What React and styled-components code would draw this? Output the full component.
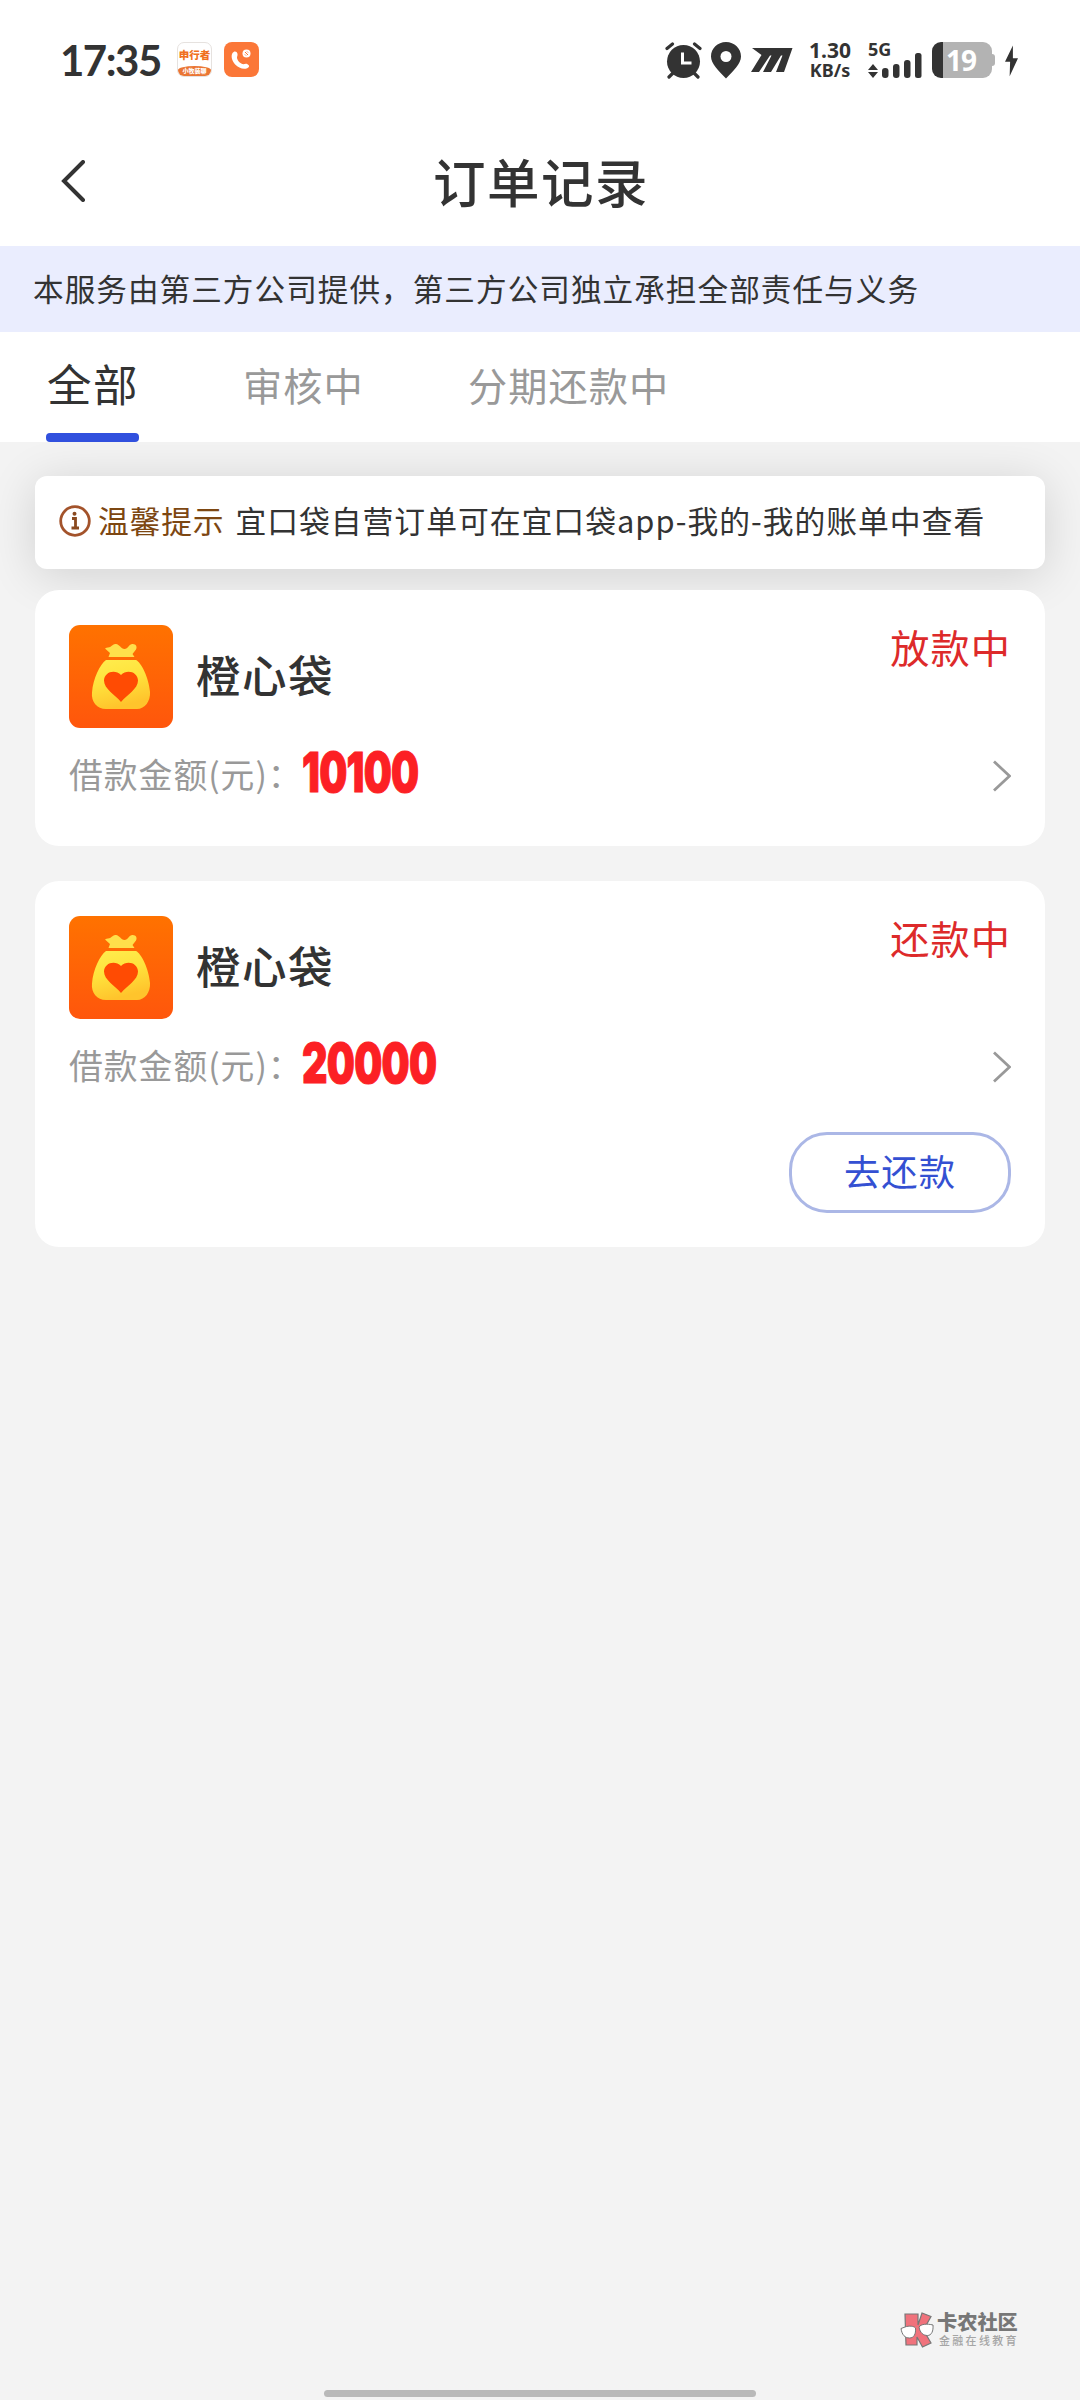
import React from "react";
import styled, {createGlobalStyle} from "styled-components";

const GlobalStyle = createGlobalStyle`
  * {
    box-sizing: border-box;
  }
  body {
    margin: 0;
    background: #f3f3f3;
    color: #333;
    font-family: "Noto Sans CJK SC", sans-serif;
  }
`;

const Screen = styled.div`
  display: flex;
  flex-direction: column;
  width: 1080px;
  height: 2400px;
  overflow: hidden;
  background: #f3f3f3;
  white-space: nowrap;
`;

const StatusBar = styled.div`
  display: flex;
  align-items: flex-start;
  height: 114px;
  padding: 42px 62px 0 60px;
  background: #fff;

  svg {
    display: block;
    flex: none;
  }
`;

const Time = styled.div`
  width: 117px;
  font: 700 42px/36px Lato, sans-serif;
  letter-spacing: -1.5px;
`;

const AppBadge = styled.div`
  display: flex;
  flex-direction: column;
  justify-content: space-between;
  width: 35px;
  height: 35px;
  margin-right: 12px;
  padding-top: 6px;
  overflow: hidden;
  border: 1px solid #e6e2df;
  border-radius: 7px;
  background: #fff;
  color: #f07020;
  font-size: 10.5px;
  font-weight: 900;
  line-height: 12px;
  text-align: center;
`;

const BadgeFoot = styled.div`
  height: 10px;
  border-radius: 50% 50% 0 0 / 4px 4px 0 0;
  background: #ea7634;
  color: #fff;
  font-size: 6px;
  line-height: 10px;
`;

const StatusIcons = styled.div`
  display: flex;
  margin-left: auto;
`;

const Speed = styled.div`
  width: 44px;
  margin: -2px 16px 0 15px;
  font: 700 21px/20px "Noto Sans", sans-serif;
  text-align: center;
`;

const SpeedUnit = styled.div`
  font-size: 18px;
  line-height: 20px;
`;

const Network = styled.div`
  width: 54px;
  margin-right: 10px;
  font: 700 18px/15px "Noto Sans", sans-serif;
`;

const Battery = styled.div`
  display: flex;
  align-items: center;
  width: 60px;
  height: 36px;
  padding-left: 14px;
  border-radius: 9px;
  background: linear-gradient(90deg, #333 11px, #b3b3b3 11px);
  color: #fff;
  font: 700 28px/36px "Noto Sans", sans-serif;
  letter-spacing: -1px;
`;

const BatteryNub = styled.div`
  width: 3px;
  height: 12px;
  margin: 12px 10px 0 0;
  border-radius: 0 3px 3px 0;
  background: #b3b3b3;
`;

const Header = styled.header`
  display: grid;
  grid-template-columns: 120px 1fr 120px;
  align-items: center;
  height: 132px;
  background: #fff;
`;

const BackButton = styled.button`
  display: flex;
  padding: 2px 0 0 60px;
  border: 0;
  background: none;
`;

const Title = styled.h1`
  margin: 0;
  padding-left: 2px;
  font-size: 52.5px;
  font-weight: 500;
  letter-spacing: 1.5px;
  line-height: 78px;
  text-align: center;
`;

const Notice = styled.div`
  height: 86px;
  padding-left: 33px;
  background: #eaedfe;
  font-size: 30.6px;
  letter-spacing: 1.05px;
  line-height: 84px;
`;

const Tabs = styled.nav`
  display: flex;
  gap: 103px;
  height: 110px;
  padding-left: 46px;
  background: #fff;
`;

const Tab = styled.div`
  display: flex;
  flex-direction: column;
  justify-content: space-between;
  color: ${props => props.$active ? "#333" : "#999"};
  font-size: ${props => props.$active ? "44.5px" : "39.2px"};
  letter-spacing: ${props => props.$active ? "1.5px" : "1.1px"};
  line-height: ${props => props.$active ? "102px" : "105px"};
  text-indent: 1px;

  &::after {
    content: "";
    height: 9px;
    margin-top: -5px;
    border-radius: 4px;
    background: ${props => props.$active ? "#3150de" : "transparent"};
  }
`;

const Content = styled.main`
  display: flex;
  flex: 1;
  flex-direction: column;
  min-height: 0;
  padding: 34px 35px 0;
  overflow: hidden;
`;

const Tip = styled.div`
  display: flex;
  align-items: center;
  height: 93px;
  margin-bottom: 21px;
  padding: 0 0 5px 24px;
  border-radius: 12px;
  background: #fff;
  box-shadow: 0 6px 48px rgba(0, 0, 0, 0.14);
  font-size: 30.8px;
  letter-spacing: 1px;
  line-height: 86px;

  svg {
    margin-top: 2px;
  }
`;

const TipTitle = styled.span`
  margin: 0 11px 0 7px;
  color: #7d4712;
  letter-spacing: 0.8px;
`;

const Card = styled.section`
  z-index: 1;
  height: ${props => props.$height};
  margin-bottom: 35px;
  padding: 35px 34px 0;
  border-radius: 24px;
  background: #fff;
`;

const CardHead = styled.div`
  display: flex;
  height: 103px;
`;

const Name = styled.h2`
  margin: 0 auto 0 23px;
  font-size: 44.5px;
  font-weight: 500;
  letter-spacing: 1.5px;
  line-height: 97px;
`;

const Status = styled.div`
  color: #dd2a2a;
  font-size: 39.2px;
  letter-spacing: 1.1px;
  line-height: 43px;
`;

const AmountRow = styled.div`
  display: flex;
  align-items: center;
  height: 96px;
`;

const Label = styled.span`
  width: 233px;
  margin-top: -5px;
  color: #999;
  font-size: 33.8px;
  letter-spacing: 1px;
`;

const Amount = styled.span`
  margin: -9px auto 0 0;
  color: #fc2024;
  font: 900 54.5px/60px Inter, sans-serif;
  letter-spacing: -1px;
  transform: scaleX(0.725);
  transform-origin: left;
  -webkit-text-stroke: 1px #fc2024;
`;

const RepayButton = styled.button`
  display: block;
  width: 222px;
  height: 81px;
  margin: 17px 0 0 auto;
  padding: 0 0 4px;
  border: 3px solid #abb7e6;
  border-radius: 38px;
  background: #fff;
  color: #3450d2;
  font: 400 36.3px/71px "Noto Sans CJK SC", sans-serif;
  letter-spacing: 1px;
`;

const Footer = styled.footer`
  display: flex;
  flex-direction: column;
  height: 90px;
`;

const Brand = styled.div`
  display: flex;
  gap: 3px;
  height: 77px;
  padding: 2px 0 0 900px;
`;

const BrandName = styled.div`
  color: #777;
  font-size: 20.2px;
  font-weight: 900;
  line-height: 20px;
`;

const BrandSlogan = styled.div`
  padding-left: 2px;
  color: #a5a5a5;
  font-size: 11px;
  font-weight: 500;
  letter-spacing: 2.3px;
  line-height: 16px;
`;

const HomeBar = styled.div`
  width: 432px;
  height: 7px;
  margin: 3px auto 0;
  border-radius: 4px;
  background: #b9b9b9;
`;

const PhoneIcon = () => (
  <svg width="35" height="35" viewBox="0 0 35 35">
    <rect width="35" height="35" rx="8" fill="#fb7738"/>
    <path d="M8.500 11c1.500-2.500 4.500-2 5 .8.400 2.200-1 3-.3 5 .8 2.400 2.600 4.300 5 5.200 1.800.6 3.300-.8 5.300.2 2.300 1.200 2.200 3-.3 4-4 1.400-8.700-.2-12-3.700-3.300-3.600-4.500-8.500-2.700-11.500z" fill="#fff"/>
    <circle cx="22.500" cy="11.500" r="4" fill="#fff"/>
    <path d="M21 10l3 3M21 12.500l1 1M23 9.500l1 1" stroke="#fb7738" strokeWidth="1"/>
  </svg>
);

const AlarmIcon = () => (
  <svg width="37" height="37" viewBox="0 0 37 37">
    <g stroke="#333" strokeWidth="3.200" strokeLinecap="round">
      <path d="M2 6.500L7.500 2M29.500 2L35 6.500M8 31l-4 4M29 31l4 4"/>
    </g>
    <circle cx="18.500" cy="19.500" r="16.500" fill="#333"/>
    <path d="M17.500 10.500v10.500h9" fill="none" stroke="#fff" strokeWidth="3"/>
  </svg>
);

const PinIcon = () => (
  <svg width="39" height="37" viewBox="-9 0 39 37">
    <path d="M15 0C6.500 0 0 6.500 0 14.500 0 22 8 29 15 36.500 22 29 30 22 30 14.500 30 6.500 23.500 0 15 0z" fill="#333"/>
    <circle cx="15" cy="14.500" r="5.500" fill="#fff"/>
  </svg>
);

const MotionIcon = () => (
  <svg width="52" height="37" viewBox="-10 0 52 37">
    <path d="M1 6h40.500L33 30h-8l6.500-16.500h-1.500L20 30h-8l8.500-16.500H19L8 30H0l10.500-17z" fill="#333"/>
  </svg>
);

const SignalIcon = () => (
  <svg width="54" height="26" viewBox="0 0 54 26" style={{marginTop: -4}}>
    <path d="M5 11l5 6H0zM5 25l5-6H0z" fill="#333"/>
    <rect x="14" y="15" width="6.500" height="10" rx="3" fill="#333"/>
    <rect x="25" y="11" width="6.500" height="14" rx="3" fill="#333"/>
    <rect x="36" y="7" width="6.500" height="18" rx="3" fill="#333"/>
    <rect x="47" y="0" width="6.500" height="25" rx="2.500" fill="#333"/>
  </svg>
);

const BoltIcon = () => (
  <svg width="13" height="36" viewBox="0 0 14 36">
    <path d="M8.500 2.500L0 20h5.500L5 35.500 14 16H8.500z" fill="#333"/>
  </svg>
);

const InfoIcon = () => (
  <svg width="32" height="32" viewBox="0 0 32 32">
    <circle cx="16" cy="16" r="14.300" fill="none" stroke="#a3532b" strokeWidth="2.800"/>
    <path d="M13 13.500h3.500v9M12.500 23h7.500" fill="none" stroke="#8a4a20" strokeWidth="2.800"/>
    <circle cx="15.500" cy="8.800" r="2" fill="#8a4a20"/>
  </svg>
);

const BagIcon = () => (
  <svg width="104" height="103" viewBox="0 0 104 103">
    <defs>
      <linearGradient id="orange" x2="0" y2="1">
        <stop stopColor="#ff7200"/>
        <stop offset="1" stopColor="#ff560c"/>
      </linearGradient>
      <linearGradient id="gold" x2="0.300" y2="1">
        <stop stopColor="#ffed4e"/>
        <stop offset="0.500" stopColor="#ffe23c"/>
        <stop offset="1" stopColor="#ffc42c"/>
      </linearGradient>
    </defs>
    <rect width="104" height="103" rx="11" fill="url(#orange)"/>
    <path d="M39.500 32l1.500-4-5-4.500c2-1.500 4-1 5.500-1.800 2-1.200 3-3 5.500-2.700 3.500.3 5 5 8.500 5 3.500 0 4.500-5 8-5 3.500-.2 5 3 3.500 5.500L63.500 29l2 3z" fill="#ffdf4b"/>
    <path d="M37 35h30c5 2 13 18 14 32 .6 9-5 17-13 17H37c-9 0-15-7.500-14-16.500 1-14 8-28 14-32.500z" fill="url(#gold)"/>
    <path d="M52 77C46 69.500 35 64 35 55.500 35 47 46 43.500 52 50c6-6.500 17-3 17 5.500C69 64 58 69.500 52 77z" fill="#ff4b03"/>
  </svg>
);

const ArrowIcon = () => (
  <svg width="18" height="32" viewBox="0 0 18 32">
    <path d="M1 1.500L16.500 16 1 30.500" fill="none" stroke="#999" strokeWidth="2.800"/>
  </svg>
);

const BrandIcon = () => (
  <svg width="34" height="36" viewBox="0 0 34 36">
    <path d="M5 2h13v11l4-12 9 3.500L23.500 18 31 31l-8.500 4L17 25v8H6z" fill="#f0727c" stroke="#777" strokeWidth="1.200"/>
    <path d="M1 16.500l4-1.500c4-1.500 9-1 10.500 1 .5 6-1.500 10-6 10S2 23 1 16.500zM19 15c2-3 8-3.500 14-2 .5 6-1.500 10.500-5.500 10.500S20 21 19 15z" fill="#fff" stroke="#777" strokeWidth="1"/>
  </svg>
);

const orders = [
  {id: 1, name: "橙心袋", status: "放款中", amount: "10100", height: "256px"},
  {id: 2, name: "橙心袋", status: "还款中", amount: "20000", height: "366px", repay: true}
];

const Order = ({order}) => (
  <Card $height={order.height}>
    <CardHead>
      <BagIcon/>
      <Name>{order.name}</Name>
      <Status>{order.status}</Status>
    </CardHead>
    <AmountRow>
      <Label>借款金额(元)：</Label>
      <Amount>{order.amount}</Amount>
      <ArrowIcon/>
    </AmountRow>
    {order.repay && <RepayButton>去还款</RepayButton>}
  </Card>
);

const App = () => (
  <Screen>
    <GlobalStyle/>
    <StatusBar>
      <Time>17:35</Time>
      <AppBadge>
        申行者
        <BadgeFoot>小牧装聊</BadgeFoot>
      </AppBadge>
      <PhoneIcon/>
      <StatusIcons>
        <AlarmIcon/>
        <PinIcon/>
        <MotionIcon/>
        <Speed>
          1.30
          <SpeedUnit>KB/s</SpeedUnit>
        </Speed>
        <Network>
          5G
          <SignalIcon/>
        </Network>
        <Battery>19</Battery>
        <BatteryNub/>
        <BoltIcon/>
      </StatusIcons>
    </StatusBar>
    <Header>
      <BackButton>
        <svg width="26" height="42" viewBox="0 0 26 42">
          <path d="M23 2L4 21l19 19" fill="none" stroke="#333" strokeWidth="4" strokeLinecap="round"/>
        </svg>
      </BackButton>
      <Title>订单记录</Title>
    </Header>
    <Notice>本服务由第三方公司提供，第三方公司独立承担全部责任与义务</Notice>
    <Tabs>
      <Tab $active>全部</Tab>
      <Tab>审核中</Tab>
      <Tab>分期还款中</Tab>
    </Tabs>
    <Content>
      <Tip>
        <InfoIcon/>
        <TipTitle>温馨提示</TipTitle>
        宜口袋自营订单可在宜口袋app-我的-我的账单中查看
      </Tip>
      {orders.map(order => <Order key={order.id} order={order}/>)}
    </Content>
    <Footer>
      <Brand>
        <BrandIcon/>
        <div>
          <BrandName>卡农社区</BrandName>
          <BrandSlogan>金融在线教育</BrandSlogan>
        </div>
      </Brand>
      <HomeBar/>
    </Footer>
  </Screen>
);

export default App;
